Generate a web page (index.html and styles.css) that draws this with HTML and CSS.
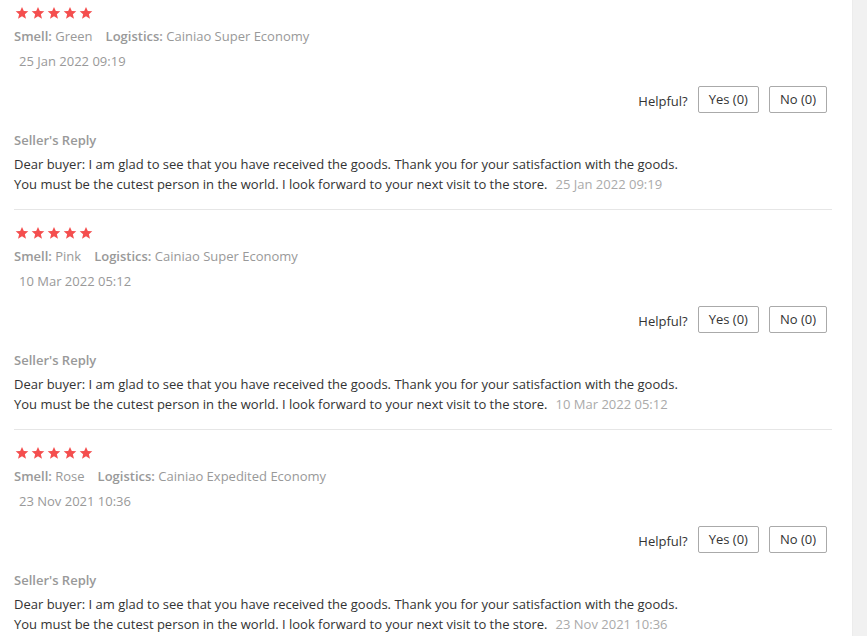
FILE: index.html
```html
<!DOCTYPE html>
<html>
<head>
<meta charset="utf-8">
<link rel="stylesheet" href="styles.css">
</head>
<body>
<div class="page">
  <div class="feedback-list">
    <div class="review">
      <div class="stars">
        <svg class="star" viewBox="0 0 24 24"><path d="M12 1.5l3.1 7.1 7.7.6-5.9 5 1.9 7.5L12 17.6l-6.8 4.1 1.9-7.5-5.9-5 7.7-.6z"/></svg>
        <svg class="star" viewBox="0 0 24 24"><path d="M12 1.5l3.1 7.1 7.7.6-5.9 5 1.9 7.5L12 17.6l-6.8 4.1 1.9-7.5-5.9-5 7.7-.6z"/></svg>
        <svg class="star" viewBox="0 0 24 24"><path d="M12 1.5l3.1 7.1 7.7.6-5.9 5 1.9 7.5L12 17.6l-6.8 4.1 1.9-7.5-5.9-5 7.7-.6z"/></svg>
        <svg class="star" viewBox="0 0 24 24"><path d="M12 1.5l3.1 7.1 7.7.6-5.9 5 1.9 7.5L12 17.6l-6.8 4.1 1.9-7.5-5.9-5 7.7-.6z"/></svg>
        <svg class="star" viewBox="0 0 24 24"><path d="M12 1.5l3.1 7.1 7.7.6-5.9 5 1.9 7.5L12 17.6l-6.8 4.1 1.9-7.5-5.9-5 7.7-.6z"/></svg>
      </div>
      <div class="info">
        <span class="info-item"><span class="label">Smell:</span> Green</span>
        <span class="info-item"><span class="label">Logistics:</span> Cainiao Super Economy</span>
      </div>
      <div class="date">25 Jan 2022 09:19</div>
      <div class="helpful">
        <span class="helpful-label">Helpful?</span>
        <button class="btn">Yes (0)</button>
        <button class="btn">No (0)</button>
      </div>
      <div class="reply-title">Seller's Reply</div>
      <div class="reply-text">Dear buyer: I am glad to see that you have received the goods. Thank you for your satisfaction with the goods.<br>You must be the cutest person in the world. I look forward to your next visit to the store.<span class="reply-date">25 Jan 2022 09:19</span></div>
    </div>

    <div class="review">
      <div class="stars">
        <svg class="star" viewBox="0 0 24 24"><path d="M12 1.5l3.1 7.1 7.7.6-5.9 5 1.9 7.5L12 17.6l-6.8 4.1 1.9-7.5-5.9-5 7.7-.6z"/></svg>
        <svg class="star" viewBox="0 0 24 24"><path d="M12 1.5l3.1 7.1 7.7.6-5.9 5 1.9 7.5L12 17.6l-6.8 4.1 1.9-7.5-5.9-5 7.7-.6z"/></svg>
        <svg class="star" viewBox="0 0 24 24"><path d="M12 1.5l3.1 7.1 7.7.6-5.9 5 1.9 7.5L12 17.6l-6.8 4.1 1.9-7.5-5.9-5 7.7-.6z"/></svg>
        <svg class="star" viewBox="0 0 24 24"><path d="M12 1.5l3.1 7.1 7.7.6-5.9 5 1.9 7.5L12 17.6l-6.8 4.1 1.9-7.5-5.9-5 7.7-.6z"/></svg>
        <svg class="star" viewBox="0 0 24 24"><path d="M12 1.5l3.1 7.1 7.7.6-5.9 5 1.9 7.5L12 17.6l-6.8 4.1 1.9-7.5-5.9-5 7.7-.6z"/></svg>
      </div>
      <div class="info">
        <span class="info-item"><span class="label">Smell:</span> Pink</span>
        <span class="info-item"><span class="label">Logistics:</span> Cainiao Super Economy</span>
      </div>
      <div class="date">10 Mar 2022 05:12</div>
      <div class="helpful">
        <span class="helpful-label">Helpful?</span>
        <button class="btn">Yes (0)</button>
        <button class="btn">No (0)</button>
      </div>
      <div class="reply-title">Seller's Reply</div>
      <div class="reply-text">Dear buyer: I am glad to see that you have received the goods. Thank you for your satisfaction with the goods.<br>You must be the cutest person in the world. I look forward to your next visit to the store.<span class="reply-date">10 Mar 2022 05:12</span></div>
    </div>

    <div class="review">
      <div class="stars">
        <svg class="star" viewBox="0 0 24 24"><path d="M12 1.5l3.1 7.1 7.7.6-5.9 5 1.9 7.5L12 17.6l-6.8 4.1 1.9-7.5-5.9-5 7.7-.6z"/></svg>
        <svg class="star" viewBox="0 0 24 24"><path d="M12 1.5l3.1 7.1 7.7.6-5.9 5 1.9 7.5L12 17.6l-6.8 4.1 1.9-7.5-5.9-5 7.7-.6z"/></svg>
        <svg class="star" viewBox="0 0 24 24"><path d="M12 1.5l3.1 7.1 7.7.6-5.9 5 1.9 7.5L12 17.6l-6.8 4.1 1.9-7.5-5.9-5 7.7-.6z"/></svg>
        <svg class="star" viewBox="0 0 24 24"><path d="M12 1.5l3.1 7.1 7.7.6-5.9 5 1.9 7.5L12 17.6l-6.8 4.1 1.9-7.5-5.9-5 7.7-.6z"/></svg>
        <svg class="star" viewBox="0 0 24 24"><path d="M12 1.5l3.1 7.1 7.7.6-5.9 5 1.9 7.5L12 17.6l-6.8 4.1 1.9-7.5-5.9-5 7.7-.6z"/></svg>
      </div>
      <div class="info">
        <span class="info-item"><span class="label">Smell:</span> Rose</span>
        <span class="info-item"><span class="label">Logistics:</span> Cainiao Expedited Economy</span>
      </div>
      <div class="date">23 Nov 2021 10:36</div>
      <div class="helpful">
        <span class="helpful-label">Helpful?</span>
        <button class="btn">Yes (0)</button>
        <button class="btn">No (0)</button>
      </div>
      <div class="reply-title">Seller's Reply</div>
      <div class="reply-text">Dear buyer: I am glad to see that you have received the goods. Thank you for your satisfaction with the goods.<br>You must be the cutest person in the world. I look forward to your next visit to the store.<span class="reply-date">23 Nov 2021 10:36</span></div>
    </div>
  </div>
  <div class="side-strip"></div>
</div>
</body>
</html>
```

FILE: styles.css
```css
html, body {
  margin: 0;
  padding: 0;
  background: #fff;
  height: 100%;
  overflow: hidden;
}
body {
  font-family: "Open Sans", "Noto Sans", sans-serif;
  font-size: 13px;
  color: #333;
}
.page {
  display: flex;
  height: 100%;
}
.feedback-list {
  width: 818px;
  margin-left: 14px;
  margin-top: -10px;
}
.side-strip {
  margin-left: auto;
  width: 14px;
  background: #f1f1f1;
  border-left: 1px solid #ececec;
}
.review {
  border-bottom: 1px solid #e6e6e6;
  padding: 15px 0 15px;
}
.stars {
  display: flex;
  gap: 2px;
  height: 16px;
  align-items: center;
  margin-left: 1px;
}
.star {
  width: 14px;
  height: 14px;
  fill: #f44e4e;
}
.info {
  display: flex;
  gap: 13px;
  margin-top: 5px;
  line-height: 20px;
  color: #999;
}
.label {
  font-weight: 600;
  color: #999;
}
.date {
  margin-top: 5px;
  line-height: 20px;
  color: #999;
  padding-left: 5px;
}
.helpful {
  display: flex;
  justify-content: flex-end;
  align-items: center;
  gap: 10px;
  margin-top: 15px;
  padding-right: 5px;
}
.helpful-label {
  color: #333;
  margin-top: 3px;
}
.btn {
  font-family: "Open Sans", "Noto Sans", sans-serif;
  font-size: 13px;
  color: #333;
  background: #fff;
  border: 1px solid #aaa;
  border-radius: 2px;
  height: 27px;
  padding: 0 10px;
  line-height: 25px;
}
.reply-title {
  margin-top: 17px;
  line-height: 20px;
  font-weight: 600;
  color: #999;
}
.reply-text {
  margin-top: 4px;
  line-height: 20px;
  color: #333;
}
.reply-date {
  color: #aaa;
  margin-left: 8px;
}
```
